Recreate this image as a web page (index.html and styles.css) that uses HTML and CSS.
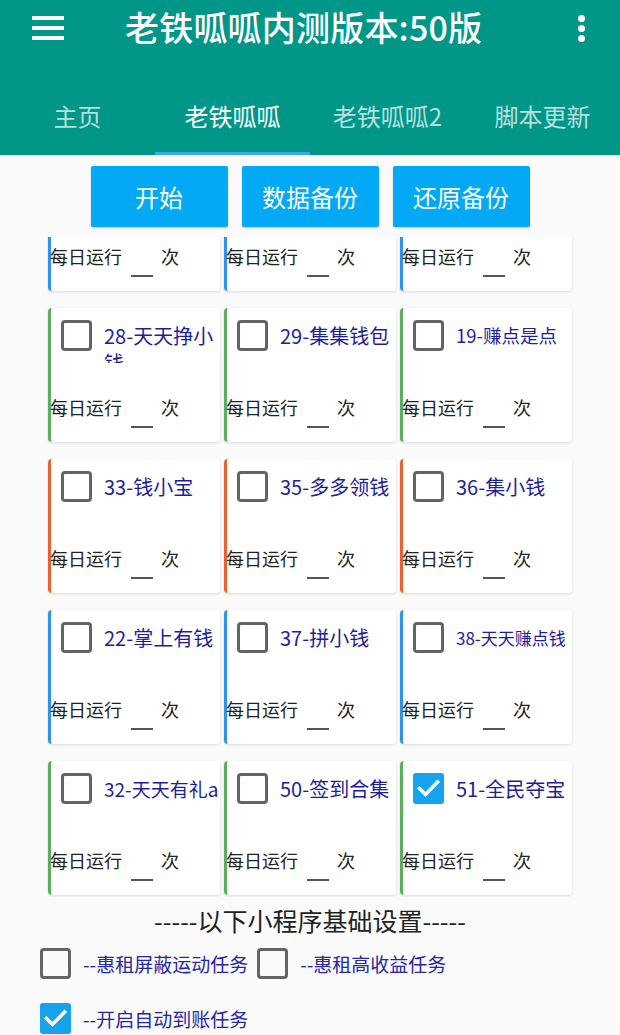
FILE: index.html
```html
<!DOCTYPE html>
<html lang="zh-CN">
<head>
<meta charset="utf-8">
<title>老铁呱呱内测版本:50版</title>
<link rel="stylesheet" href="styles.css">
</head>
<body>
<div class="screen">
  <header class="appbar">
    <div class="toolbar">
      <span class="menu"><i></i><i></i><i></i></span>
      <h1 class="title">老铁呱呱内测版本:50版</h1>
      <span class="more"><i></i><i></i><i></i></span>
    </div>
    <nav class="tabs">
      <div class="tab">主页</div>
      <div class="tab active">老铁呱呱</div>
      <div class="tab">老铁呱呱2</div>
      <div class="tab">脚本更新</div>
    </nav>
  </header>

  <div class="actions">
    <button class="btn">开始</button>
    <button class="btn">数据备份</button>
    <button class="btn">还原备份</button>
  </div>

  <div class="viewport">
    <div class="grid">
      <div class="card blue"><div class="head"><span class="box"></span><span class="name"></span></div><div class="run"><span>每日运行</span><span class="field"></span><span>次</span></div></div>
      <div class="card blue"><div class="head"><span class="box"></span><span class="name"></span></div><div class="run"><span>每日运行</span><span class="field"></span><span>次</span></div></div>
      <div class="card blue"><div class="head"><span class="box"></span><span class="name"></span></div><div class="run"><span>每日运行</span><span class="field"></span><span>次</span></div></div>

      <div class="card green"><div class="head"><span class="box"></span><span class="name">28-天天挣小钱</span></div><div class="run"><span>每日运行</span><span class="field"></span><span>次</span></div></div>
      <div class="card green"><div class="head"><span class="box"></span><span class="name">29-集集钱包</span></div><div class="run"><span>每日运行</span><span class="field"></span><span>次</span></div></div>
      <div class="card green"><div class="head"><span class="box"></span><span class="name sm">19-赚点是点</span></div><div class="run"><span>每日运行</span><span class="field"></span><span>次</span></div></div>

      <div class="card orange"><div class="head"><span class="box"></span><span class="name">33-钱小宝</span></div><div class="run"><span>每日运行</span><span class="field"></span><span>次</span></div></div>
      <div class="card orange"><div class="head"><span class="box"></span><span class="name">35-多多领钱</span></div><div class="run"><span>每日运行</span><span class="field"></span><span>次</span></div></div>
      <div class="card orange"><div class="head"><span class="box"></span><span class="name">36-集小钱</span></div><div class="run"><span>每日运行</span><span class="field"></span><span>次</span></div></div>

      <div class="card blue"><div class="head"><span class="box"></span><span class="name">22-掌上有钱</span></div><div class="run"><span>每日运行</span><span class="field"></span><span>次</span></div></div>
      <div class="card blue"><div class="head"><span class="box"></span><span class="name">37-拼小钱</span></div><div class="run"><span>每日运行</span><span class="field"></span><span>次</span></div></div>
      <div class="card blue"><div class="head"><span class="box"></span><span class="name xs">38-天天赚点钱</span></div><div class="run"><span>每日运行</span><span class="field"></span><span>次</span></div></div>

      <div class="card green"><div class="head"><span class="box"></span><span class="name md">32-天天有礼a</span></div><div class="run"><span>每日运行</span><span class="field"></span><span>次</span></div></div>
      <div class="card green"><div class="head"><span class="box"></span><span class="name">50-签到合集</span></div><div class="run"><span>每日运行</span><span class="field"></span><span>次</span></div></div>
      <div class="card green"><div class="head"><span class="box checked"><svg viewBox="0 0 31 31" width="31" height="31"><polyline points="6.5,15.5 12.5,21.5 24.5,9" fill="none" stroke="#fff" stroke-width="3.6" stroke-linecap="square"/></svg></span><span class="name">51-全民夺宝</span></div><div class="run"><span>每日运行</span><span class="field"></span><span>次</span></div></div>
    </div>
  </div>

  <div class="section-title">-----以下小程序基础设置-----</div>

  <div class="settings">
    <label class="opt"><span class="box"></span><span class="opt-text">--惠租屏蔽运动任务</span></label>
    <label class="opt"><span class="box"></span><span class="opt-text">--惠租高收益任务</span></label>
    <label class="opt"><span class="box checked"><svg viewBox="0 0 31 31" width="31" height="31"><polyline points="6.5,15.5 12.5,21.5 24.5,9" fill="none" stroke="#fff" stroke-width="3.6" stroke-linecap="square"/></svg></span><span class="opt-text">--开启自动到账任务</span></label>
  </div>
</div>
</body>
</html>
```

FILE: styles.css
```css
* { box-sizing: border-box; }

html, body {
  margin: 0;
  padding: 0;
}

body {
  background: #fafafa;
  font-family: "Noto Sans CJK SC", "Noto Sans", sans-serif;
  color: #222;
}

.screen {
  width: 620px;
  height: 1035px;
  overflow: hidden;
  background: #fafafa;
}

/* ---------- App bar ---------- */
.appbar {
  background: #009688;
  height: 155px;
  color: #fff;
}

.toolbar {
  height: 54px;
  display: flex;
  align-items: center;
  padding: 0 0 0 32px;
}

.menu {
  width: 32px;
  height: 24px;
  display: flex;
  flex-direction: column;
  justify-content: space-between;
  margin-top: 2px;
}
.menu i {
  display: block;
  height: 4px;
  background: #fff;
}

.title {
  margin: 0 0 0 61px;
  font-size: 34px;
  font-weight: 500;
  line-height: 40px;
  letter-spacing: 0.2px;
  flex: 1;
  white-space: nowrap;
}

.more {
  width: 8px;
  margin-right: 34px;
  display: flex;
  flex-direction: column;
  gap: 3px;
  margin-top: 2px;
}
.more i {
  display: block;
  width: 7px;
  height: 7px;
  border-radius: 50%;
  background: #fff;
}

.tabs {
  margin-top: 21px;
  height: 80px;
  display: flex;
}
.tab {
  flex: 1;
  display: flex;
  align-items: center;
  justify-content: center;
  padding-top: 3px;
  font-size: 24px;
  color: rgba(255, 255, 255, 0.72);
  border-bottom: 3px solid transparent;
}
.tab.active {
  color: #fff;
  border-bottom-color: #3ea6f2;
}

/* ---------- Action buttons ---------- */
.actions {
  display: flex;
  justify-content: center;
  gap: 14px;
  padding-top: 11px;
}
.btn {
  width: 137px;
  height: 61px;
  border: none;
  border-radius: 2px;
  background: #03a9f4;
  color: #fff;
  font-family: inherit;
  font-size: 24px;
  box-shadow: 0 1px 2px rgba(0, 0, 0, 0.2);
  padding: 0;
}

/* ---------- Cards ---------- */
.viewport {
  margin-top: 10px;
  height: 660px;
  overflow: hidden;
}

.grid {
  margin-top: -80px;
  padding: 0 48px;
  display: grid;
  grid-template-columns: repeat(3, 172px);
  grid-auto-rows: 134px;
  column-gap: 4px;
  row-gap: 17px;
}

.card {
  background: #fff;
  border-radius: 4px;
  border-left: 3px solid #2196f3;
  box-shadow: 0 1px 3px rgba(0, 0, 0, 0.13);
  padding-top: 12px;
  display: flex;
  flex-direction: column;
}
.card.blue { border-left-color: #2e93e6; }
.card.green { border-left-color: #5aae5e; }
.card.orange { border-left-color: #e8622f; }

.head {
  height: 41px;
  display: flex;
  align-items: flex-start;
  padding-left: 10px;
  gap: 12px;
}

.box {
  flex: none;
  width: 31px;
  height: 31px;
  border: 3px solid #646464;
  border-radius: 4px;
  display: block;
}
.box.checked {
  border: none;
  background: #14a3ec;
  border-radius: 3px;
}
.box svg { display: block; }

.name {
  flex: 1;
  margin-top: 2px;
  font-size: 20px;
  line-height: 27px;
  max-height: 41px;
  overflow: hidden;
  color: #1e1e9c;
}
.name.md { font-size: 19px; }
.name.sm { font-size: 18.5px; }
.name.xs { font-size: 17px; }

.run {
  margin-top: 34px;
  margin-left: -1px;
  display: flex;
  align-items: flex-start;
  font-size: 18px;
  line-height: 24px;
  color: #222;
}
.field {
  width: 22px;
  height: 33px;
  margin: 0 8px 0 9px;
  border-bottom: 2px solid #555;
}

/* ---------- Settings ---------- */
.section-title {
  margin-top: 6px;
  text-align: center;
  font-size: 25px;
  line-height: 34px;
  color: #222;
}

.settings {
  margin-top: 11px;
  padding-left: 40px;
  display: flex;
  flex-wrap: wrap;
  column-gap: 9px;
  row-gap: 24px;
  width: 480px;
}
.opt {
  display: flex;
  align-items: center;
  gap: 12px;
  height: 31px;
}
.opt .box { width: 31px; height: 31px; }
.opt-text {
  font-size: 19px;
  color: #2626a6;
  white-space: nowrap;
}
```
